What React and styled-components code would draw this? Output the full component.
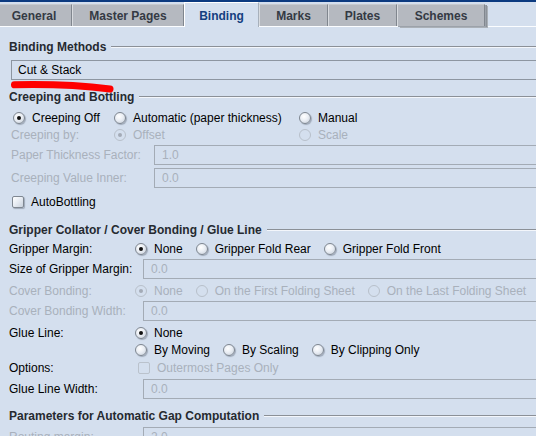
import React from "react";
import styled, { createGlobalStyle } from "styled-components";

const PANEL = "#d4dfee";
const DISABLED = "#a9b1bc";

const GlobalStyle = createGlobalStyle`
  html, body {
    margin: 0;
    padding: 0;
    background: ${PANEL};
    overflow: hidden;
  }
  body {
    font-family: "Liberation Sans", Arial, sans-serif;
    font-size: 12px;
    color: #000;
  }
`;

const Screen = styled.div`
  width: 536px;
  height: 436px;
  overflow: hidden;
  box-sizing: border-box;
  border-top: 2px solid #0b3a80;
`;

const TabStrip = styled.div`
  display: flex;
  align-items: flex-end;
  height: 24px;
  border-bottom: 1px solid #fbfdff;
`;

const Tab = styled.div`
  width: ${(p) => p.$w}px;
  margin-left: ${(p) => p.$ml || 0}px;
  height: ${(p) => (p.$active ? 25 : 22)}px;
  margin-bottom: ${(p) => (p.$active ? -1 : 0)}px;
  padding-top: ${(p) => (p.$active ? 2 : 0)}px;
  box-sizing: border-box;
  flex: none;
  display: flex;
  align-items: center;
  justify-content: center;
  font-weight: bold;
  font-size: 12px;
  position: relative;
  z-index: ${(p) => (p.$active ? 1 : 0)};
  color: ${(p) => (p.$active ? "#14407f" : "#343a44")};
  background: ${(p) => (p.$active ? PANEL : "#b5b9c0")};
  border-top: 1px solid ${(p) => (p.$active ? "#ffffff" : "#c6cacf")};
  border-left: 1px solid ${(p) => (p.$active ? "#ffffff" : "#d8dbdf")};
  border-right: 1px solid ${(p) => (p.$active ? "#a7b0bb" : "#80868e")};
  box-shadow: ${(p) =>
    p.$last ? "1px 1px 0 #9ca2aa, 2px 1px 0 #8c929a, 3px 2px 0 #aab0b7" : "none"};
`;

const Panel = styled.div`
  width: 570px;
  padding-left: 9px;
  box-sizing: border-box;
`;

const SectionHeader = styled.div`
  display: flex;
  align-items: center;
  height: 14px;
  margin-top: ${(p) => p.$mt}px;
  font-weight: bold;
  color: #262a30;
  white-space: nowrap;
  &::after {
    content: "";
    flex: 1;
    margin-left: 5px;
    border-top: 1px solid #8b9097;
    border-bottom: 1px solid #f3f6fb;
  }
`;

const ComboWrap = styled.div`
  position: relative;
  margin-top: 6px;
  margin-left: 2px;
`;

const Combo = styled.div`
  height: 20px;
  box-sizing: border-box;
  border: 1px solid #8d96a1;
  padding-left: 6px;
  line-height: 18px;
  color: #000;
`;

const Scribble = styled.svg`
  position: absolute;
  left: 0;
  top: 18px;
  width: 112px;
  height: 16px;
  pointer-events: none;
`;

const RadioGrid = styled.div`
  display: grid;
  grid-template-columns: 101px 185px auto;
  align-items: center;
  height: 17px;
  margin-top: ${(p) => p.$mt || 0}px;
  margin-left: 4px;
`;

const FieldRow = styled.div`
  display: grid;
  grid-template-columns: ${(p) => p.$label}px 1fr;
  align-items: center;
  height: 20px;
  margin-top: ${(p) => p.$mt || 0}px;
`;

const OptionRow = styled.div`
  display: grid;
  grid-template-columns: 126px 1fr;
  align-items: center;
  height: 17px;
  margin-top: ${(p) => p.$mt || 0}px;
`;

const Options = styled.div`
  display: flex;
  align-items: center;
  gap: 13px;
  margin-left: ${(p) => p.$ml || 0}px;
`;

const Label = styled.span`
  padding-left: ${(p) => p.$indent || 0}px;
  margin-left: ${(p) => p.$ml || 0}px;
  color: ${(p) => (p.$disabled ? DISABLED : "#000")};
  white-space: nowrap;
`;

const Field = styled.div`
  height: 20px;
  box-sizing: border-box;
  border: 1px solid #a3abb5;
  padding-left: 7px;
  line-height: 18px;
  color: ${DISABLED};
`;

const Option = styled.label`
  display: inline-flex;
  align-items: center;
  gap: 7px;
  white-space: nowrap;
  color: ${(p) => (p.$disabled ? DISABLED : "#000")};
`;

const RadioMark = styled.span`
  width: 12px;
  height: 12px;
  flex: none;
  box-sizing: border-box;
  border-radius: 50%;
  position: relative;
  border: 1px solid ${(p) => (p.$disabled ? "#b8c0ca" : "#7e8690")};
  background: ${(p) =>
    p.$disabled
      ? PANEL
      : "radial-gradient(circle at 40% 35%, #ffffff 0%, #eaeef4 45%, #c2cbd7 100%)"};
  box-shadow: ${(p) =>
    p.$disabled ? "none" : "1px 1px 1px rgba(60, 70, 85, 0.35)"};
  &::after {
    content: "";
    display: ${(p) => (p.$checked ? "block" : "none")};
    position: absolute;
    left: 3px;
    top: 3px;
    width: 4px;
    height: 4px;
    border-radius: 50%;
    background: ${(p) => (p.$disabled ? "#a3abb6" : "#111")};
  }
`;

const CheckMark = styled.span`
  width: 12px;
  height: 12px;
  flex: none;
  box-sizing: border-box;
  border-radius: 2px;
  margin-left: ${(p) => p.$ml || 0}px;
  border: 1px solid ${(p) => (p.$disabled ? "#bac2cc" : "#7f8791")};
  background: ${(p) =>
    p.$disabled ? PANEL : "linear-gradient(135deg, #ffffff 0%, #e6ebf2 50%, #c9d1dc 100%)"};
  box-shadow: ${(p) =>
    p.$disabled ? "none" : "1px 1px 1px rgba(60, 70, 85, 0.35)"};
`;

const Radio = ({ checked, disabled, children }) => (
  <Option $disabled={disabled}>
    <RadioMark $checked={checked} $disabled={disabled} />
    {children}
  </Option>
);

const Check = ({ disabled, ml, children }) => (
  <Option $disabled={disabled}>
    <CheckMark $disabled={disabled} $ml={ml} />
    {children}
  </Option>
);

const tabs = [
  { name: "General", w: 76, ml: -4 },
  { name: "Master Pages", w: 112 },
  { name: "Binding", w: 75, active: true },
  { name: "Marks", w: 69 },
  { name: "Plates", w: 69 },
  { name: "Schemes", w: 88, last: true },
];

export default function App() {
  return (
    <Screen>
      <GlobalStyle />
      <TabStrip>
        {tabs.map((t) => (
          <Tab key={t.name} $w={t.w} $ml={t.ml} $active={t.active} $last={t.last}>
            {t.name}
          </Tab>
        ))}
      </TabStrip>

      <Panel>
        <SectionHeader $mt={13}>Binding Methods</SectionHeader>
        <ComboWrap>
          <Combo>Cut &amp; Stack</Combo>
          <Scribble viewBox="0 0 112 16">
            <path
              d="M3.5 6.8 Q 55 5.6 99 11"
              fill="none"
              stroke="#ff0000"
              strokeWidth="7"
              strokeLinecap="round"
            />
          </Scribble>
        </ComboWrap>

        <SectionHeader $mt={10}>Creeping and Bottling</SectionHeader>
        <RadioGrid $mt={5}>
          <Radio checked>Creeping Off</Radio>
          <Radio>Automatic (paper thickness)</Radio>
          <Radio>Manual</Radio>
        </RadioGrid>
        <RadioGrid>
          <Label $disabled $ml={-2}>Creeping by:</Label>
          <Radio checked disabled>Offset</Radio>
          <Radio disabled>Scale</Radio>
        </RadioGrid>
        <FieldRow $label={145} $mt={2}>
          <Label $disabled $indent={2}>Paper Thickness Factor:</Label>
          <Field>1.0</Field>
        </FieldRow>
        <FieldRow $label={145} $mt={3}>
          <Label $disabled $indent={2}>Creeping Value Inner:</Label>
          <Field>0.0</Field>
        </FieldRow>
        <OptionRow $mt={5}>
          <Check ml={3}>AutoBottling</Check>
        </OptionRow>

        <SectionHeader $mt={13}>Gripper Collator / Cover Bonding / Glue Line</SectionHeader>
        <OptionRow $mt={3}>
          <Label>Gripper Margin:</Label>
          <Options>
            <Radio checked>None</Radio>
            <Radio>Gripper Fold Rear</Radio>
            <Radio>Gripper Fold Front</Radio>
          </Options>
        </OptionRow>
        <FieldRow $label={134} $mt={2}>
          <Label>Size of Gripper Margin:</Label>
          <Field>0.0</Field>
        </FieldRow>
        <OptionRow $mt={3}>
          <Label $disabled>Cover Bonding:</Label>
          <Options>
            <Radio checked disabled>None</Radio>
            <Radio disabled>On the First Folding Sheet</Radio>
            <Radio disabled>On the Last Folding Sheet</Radio>
          </Options>
        </OptionRow>
        <FieldRow $label={134} $mt={2}>
          <Label $disabled>Cover Bonding Width:</Label>
          <Field>0.0</Field>
        </FieldRow>
        <OptionRow $mt={3}>
          <Label>Glue Line:</Label>
          <Options>
            <Radio checked>None</Radio>
          </Options>
        </OptionRow>
        <OptionRow>
          <span />
          <Options>
            <Radio>By Moving</Radio>
            <Radio>By Scaling</Radio>
            <Radio>By Clipping Only</Radio>
          </Options>
        </OptionRow>
        <OptionRow $mt={1}>
          <Label>Options:</Label>
          <Options $ml={3}>
            <Check disabled>Outermost Pages Only</Check>
          </Options>
        </OptionRow>
        <FieldRow $label={134} $mt={3}>
          <Label>Glue Line Width:</Label>
          <Field>0.0</Field>
        </FieldRow>

        <SectionHeader $mt={10}>Parameters for Automatic Gap Computation</SectionHeader>
        <FieldRow $label={134} $mt={4}>
          <Label $disabled>Routing margin:</Label>
          <Field>2.0</Field>
        </FieldRow>
      </Panel>
    </Screen>
  );
}
